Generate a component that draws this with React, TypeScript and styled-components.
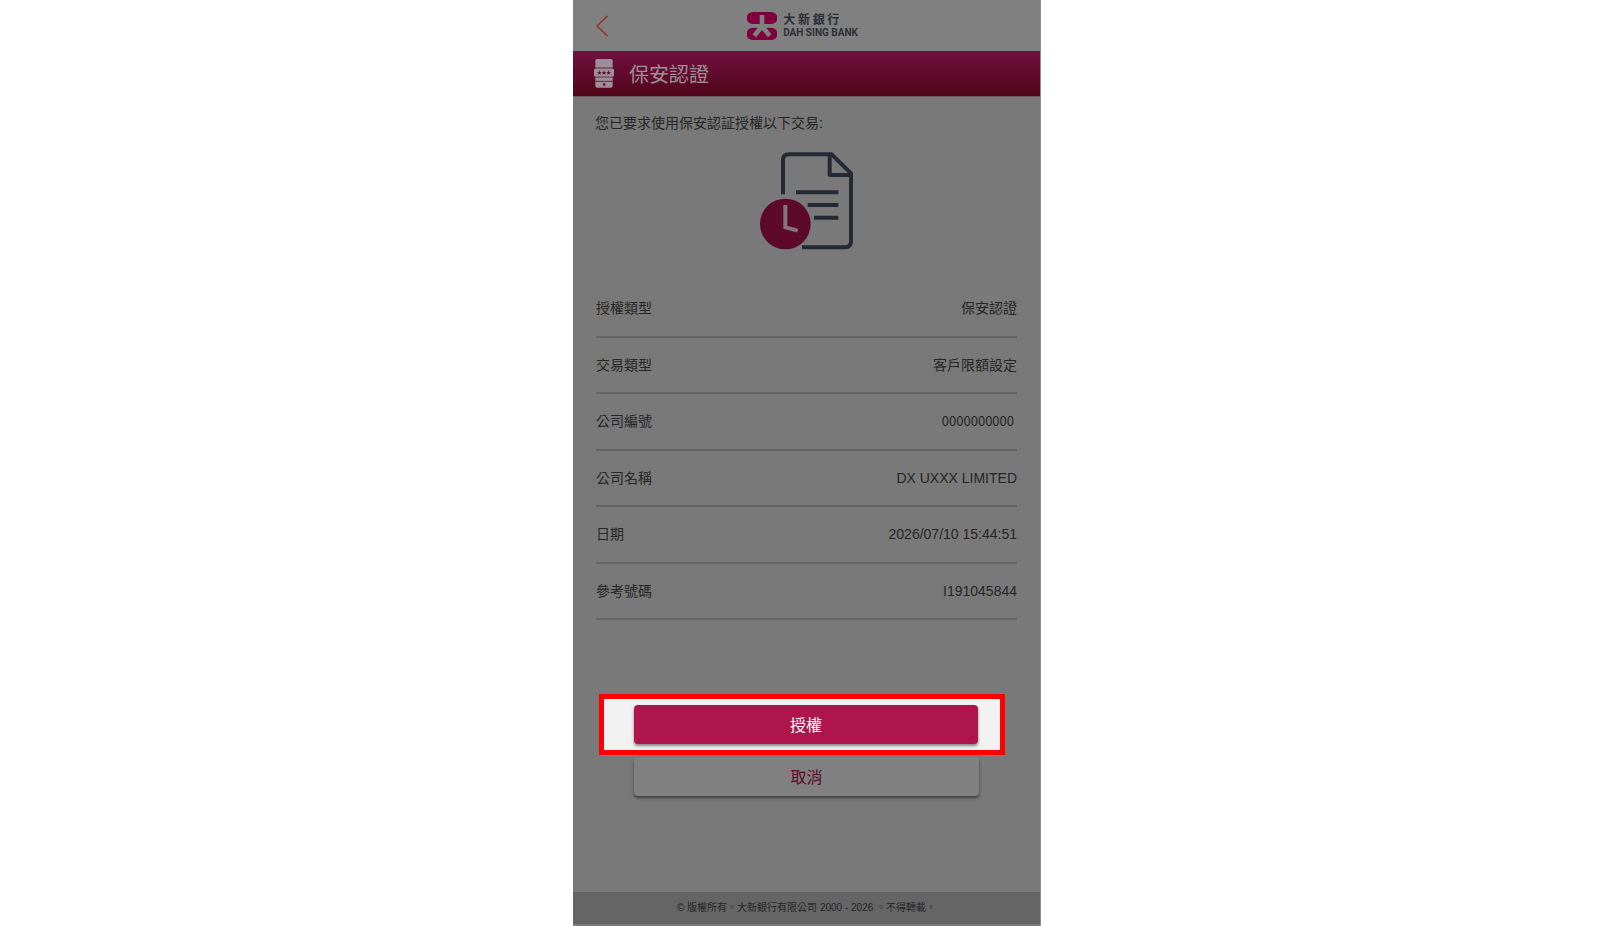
import React from "react";
import styled, { createGlobalStyle } from "styled-components";

const latin = `"Liberation Sans", "Noto Sans CJK TC", sans-serif`;
const cjk = `"Noto Sans CJK TC", sans-serif`;

const GlobalStyle = createGlobalStyle`
  * { box-sizing: border-box; }
  body { margin: 0; background: #fff; font-family: ${latin}; }
`;

const Page = styled.div`
  display: flex;
  justify-content: center;
  min-height: 100vh;
  padding-right: 7px;
`;

const Screen = styled.div`
  display: flex;
  flex-direction: column;
  width: 100%;
  max-width: 468px;
  background: #797979;
  color: #262626;
  border-right: 1px solid #8e8e8e;
`;

const Header = styled.header`
  display: grid;
  grid-template-columns: 1fr auto 1fr;
  align-items: center;
  height: 51px;
  padding: 0 30px 0 22px;
  background: #808080;
`;

const BackButton = styled.button`
  display: flex;
  justify-self: start;
  padding: 0;
  border: 0;
  background: none;
  cursor: pointer;
`;

const Brand = styled.div`
  display: flex;
  align-items: center;
  gap: 6px;
`;

const BrandText = styled.div`
  display: flex;
  flex-direction: column;
  gap: 1px;
  color: #2c3036;
`;

const BrandZh = styled.span`
  font: 700 12px/14px ${cjk};
`;

const BrandEn = styled.span`
  font: 700 10px/12px Roboto, sans-serif;
  white-space: nowrap;
`;

const TitleBar = styled.div`
  display: flex;
  align-items: center;
  gap: 15px;
  height: 46px;
  padding: 0 21px;
  background: linear-gradient(#72103e, #50061a);
  border-bottom: 1px solid #6a5a5e;
`;

const Title = styled.h1`
  margin: 0;
  color: #9b9097;
  font: 400 20px/30px ${cjk};
`;

const Main = styled.main`
  display: flex;
  flex-direction: column;
`;

const Intro = styled.p`
  margin: 16px 22px 0;
  font-size: 14px;
  line-height: 20px;
`;

const Illustration = styled.div`
  display: flex;
  justify-content: center;
  margin-top: 18px;
`;

const Details = styled.dl`
  display: grid;
  grid-auto-rows: 1fr;
  height: 339px;
  margin: 30px 23px 0;
`;

const Row = styled.div`
  display: flex;
  justify-content: space-between;
  align-items: center;
  border-bottom: 2px solid #646464;
  font-size: 14px;
  line-height: 20px;
`;

const Label = styled.dt`
  margin: 0;
`;

const Value = styled.dd<{ $account?: boolean }>`
  margin: 0;
  ${(p) => p.$account && `padding-right: 3px; font: 400 13px/20px ${cjk};`}
`;

const Highlight = styled.div`
  display: flex;
  margin: 74px 35px 0 26px;
  padding: 6px 22px 6px 30px;
  border: 5px solid #ff0000;
  background: #f2f2f2;
`;

const Action = styled.button<{ $primary?: boolean }>`
  flex: 1;
  height: 39px;
  padding: 0 0 2px;
  border: 0;
  border-radius: 4px;
  background: ${(p) => (p.$primary ? "#ae154a" : "#808080")};
  color: ${(p) => (p.$primary ? "#ffffff" : "#5c0c2a")};
  box-shadow: 0 2px 3px ${(p) => (p.$primary ? "rgba(0,0,0,.45)" : "rgba(0,0,0,.5)")};
  font: 400 16px/24px ${cjk};
  cursor: pointer;
`;

const CancelArea = styled.div`
  display: flex;
  margin: 2px 61px 16px;
`;

const Footer = styled.footer`
  display: flex;
  justify-content: center;
  align-items: center;
  height: 34px;
  margin-top: auto;
  border-bottom: 2px solid #7c7c7c;
  background: #656565;
  font-size: 10px;
  line-height: 16px;
`;

const rows = [
  { label: "授權類型", value: "保安認證" },
  { label: "交易類型", value: "客戶限額設定" },
  { label: "公司編號", value: "0000000000", account: true },
  { label: "公司名稱", value: "DX UXXX LIMITED" },
  { label: "日期", value: "2026/07/10 15:44:51" },
  { label: "參考號碼", value: "I191045844" },
];

const BackIcon = () => (
  <svg width="14" height="22" viewBox="0 0 14 22" fill="none" stroke="#98302b" strokeWidth="1.6" aria-hidden="true">
    <path d="M12.5 1 L2 11 L12.5 21" />
  </svg>
);

const BankLogo = () => (
  <svg width="30" height="28" viewBox="0 0 90 84" aria-hidden="true">
    <path fill="#80003f" d="M17 0H73A17 17 0 0 1 73 36H17A17 17 0 0 1 17 0Z" />
    <path fill="#80003f" d="M17 47H73A18 18 0 0 1 73 84H17A18 18 0 0 1 17 47Z" />
    <path
      d="M45 9V48M45 43L22 71M45 43L68 71"
      stroke="#808080"
      strokeWidth="14"
      fill="none"
    />
    <path fill="#80003f" d="M45 62L62 84H28Z" />
    <path fill="#808080" d="M0 36H90V47H0Z" />
  </svg>
);

const TokenIcon = () => (
  <svg width="20" height="29" viewBox="0 0 60 87" aria-hidden="true">
    <rect x="4" y="0" width="52" height="86" rx="5" fill="#9b9097" />
    <path d="M4 27H56M4 54H56M4 67H56" stroke="#620c2e" strokeWidth="2.5" />
    <rect x="0" y="30" width="60" height="22" rx="2" fill="#9b9097" />
    <g fill="#620c2e">
      {[16, 30, 44].map((x) => (
        <path
          key={x}
          transform={`translate(${x} 41)`}
          d="M0-7L2-2H7L3 1L5 6L0 3L-5 6L-3 1L-7-2H-2Z"
        />
      ))}
      <rect x="27" y="73" width="7" height="7" rx="2" />
    </g>
  </svg>
);

const PendingDocument = () => (
  <svg width="95" height="100" viewBox="57 33 285 300" fill="none" aria-hidden="true">
    <g stroke="#232a33" strokeWidth="12">
      <path d="M129 163V61Q129 43 147 43H275L333 100V304Q333 322 315 322H186" strokeLinejoin="round" />
      <path d="M269 43V105H333" strokeLinejoin="round" />
      <path d="M168 157H295M203 195H295M222 233H295" />
    </g>
    <circle cx="136" cy="252" r="76" fill="#5c0a28" />
    <path d="M136 195V262L173 272" stroke="#85757b" strokeWidth="12" />
  </svg>
);

export default function App() {
  return (
    <>
      <GlobalStyle />
      <Page>
        <Screen>
          <Header>
            <BackButton type="button" aria-label="返回">
              <BackIcon />
            </BackButton>
            <Brand>
              <BankLogo />
              <BrandText>
                <BrandZh>大 新 銀 行</BrandZh>
                <BrandEn>DAH SING BANK</BrandEn>
              </BrandText>
            </Brand>
          </Header>
          <TitleBar>
            <TokenIcon />
            <Title>保安認證</Title>
          </TitleBar>
          <Main>
            <Intro>您已要求使用保安認証授權以下交易:</Intro>
            <Illustration>
              <PendingDocument />
            </Illustration>
            <Details>
              {rows.map((row) => (
                <Row key={row.label}>
                  <Label>{row.label}</Label>
                  <Value $account={row.account}>{row.value}</Value>
                </Row>
              ))}
            </Details>
            <Highlight>
              <Action type="button" $primary>授權</Action>
            </Highlight>
            <CancelArea>
              <Action type="button">取消</Action>
            </CancelArea>
          </Main>
          <Footer>© 版權所有。大新銀行有限公司 2000 - 2026 。不得轉載。</Footer>
        </Screen>
      </Page>
    </>
  );
}
